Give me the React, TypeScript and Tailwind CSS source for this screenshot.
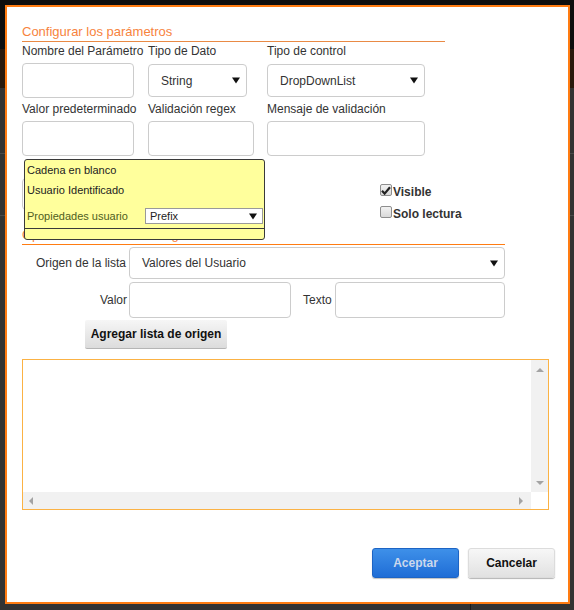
import React from 'react';

// small black triangle used by the fake <select> boxes
function Caret({ className = '' }: { className?: string }) {
  return (
    <svg width="8" height="7" viewBox="0 0 8 7" className={className}>
      <path d="M0 0.5 H8 L4 6.5 Z" fill="#111" />
    </svg>
  );
}

function FakeSelect({ value, className = '' }: { value: string; className?: string }) {
  return (
    <div
      className={
        'flex items-center justify-between border border-[#cccccc] rounded-[4px] bg-white text-[12px] text-[#333] ' +
        className
      }
    >
      <span>{value}</span>
      <Caret />
    </div>
  );
}

function TextBox({ className = '' }: { className?: string }) {
  return <div className={'border border-[#cccccc] rounded-[4px] bg-white ' + className} />;
}

function Check({ checked, label }: { checked?: boolean; label: string }) {
  return (
    <div className="flex items-center h-[22px]">
      <span className="mb-[4px] w-[12px] h-[12px] rounded-[2px] border border-[#8e8e8e] bg-[linear-gradient(#f2f2f2,#d9d9d9)] flex items-center justify-center">
        {checked && (
          <svg width="10" height="9" viewBox="0 0 10 9">
            <path d="M1 4.8 L3.6 7.6 L9 1.2" stroke="#222" strokeWidth="2.2" fill="none" />
          </svg>
        )}
      </span>
      <span className="ml-[1px] text-[12px] font-bold text-[#333]">{label}</span>
    </div>
  );
}

function ScrollArrow({ dir }: { dir: 'up' | 'down' | 'left' | 'right' }) {
  const d = {
    up: 'M0 5 L4 1 L8 5 Z',
    down: 'M0 1 L8 1 L4 5 Z',
    left: 'M5 0 L5 8 L1 4 Z',
    right: 'M1 0 L1 8 L5 4 Z',
  }[dir];
  const vertical = dir === 'up' || dir === 'down';
  return (
    <svg width={vertical ? 8 : 6} height={vertical ? 6 : 8} viewBox={vertical ? '0 0 8 6' : '0 0 6 8'}>
      <path d={d} fill="#a3a3a3" />
    </svg>
  );
}

export default function App() {
  return (
    <div
      className="relative w-[574px] h-[610px] overflow-hidden bg-[#333333] flex flex-col"
      style={{ fontFamily: '"Liberation Sans", Arial, sans-serif' }}
    >
      {/* page behind the dialog */}
      <div className="h-[52px] bg-[#0e0e0e]" />
      <div className="h-[42px] bg-[#2a190c]" />
      <div className="h-[70px] border-b border-[#4a4a4a]" />
      <div className="h-[66px] border-b border-[#4a4a4a]" />
      <div className="flex-1 flex justify-start">
        <div className="ml-[470px] mt-[374px] w-px h-[20px] bg-[#1a1a1a]" />
      </div>

      {/* dialog */}
      <div className="absolute left-[5px] top-[5px] w-[565px] h-[599px] bg-white border-2 border-[#ff7c12] pl-[15px] pt-[15px] flex flex-col">
        <div className="w-[423px] h-[20px] leading-[19px] text-[13px] text-[#f7833d] border-b border-[#e98a45]">
          Configurar los parámetros
        </div>

        <div className="flex h-[18px] leading-[18px] text-[12px] text-[#333]">
          <span className="w-[126px] whitespace-nowrap">Nombre del Parámetro</span>
          <span className="w-[119px]">Tipo de Dato</span>
          <span>Tipo de control</span>
        </div>
        <div className="mt-[3px] flex items-center h-[35px]">
          <TextBox className="w-[112px] h-[35px]" />
          <FakeSelect value="String" className="ml-[14px] w-[99px] h-[33px] pl-[12px] pr-[6px]" />
          <FakeSelect value="DropDownList" className="ml-[20px] w-[158px] h-[33px] pl-[12px] pr-[6px]" />
        </div>

        <div className="mt-[2px] flex h-[18px] leading-[18px] text-[12px] text-[#333]">
          <span className="w-[126px] whitespace-nowrap">Valor predeterminado</span>
          <span className="w-[119px]">Validación regex</span>
          <span>Mensaje de validación</span>
        </div>
        <div className="mt-[3px] flex items-center h-[35px]">
          <TextBox className="w-[112px] h-[35px]" />
          <TextBox className="ml-[14px] w-[106px] h-[35px]" />
          <TextBox className="ml-[13px] w-[158px] h-[35px]" />
        </div>

        {/* row mostly hidden under the yellow list */}
        <div className="flex h-[69px]">
          <div className="w-[358px] flex flex-col">
            <TextBox className="mt-[22px] w-[112px] h-[32px]" />
          </div>
          <div className="pt-[25px] flex flex-col">
            <Check checked label="Visible" />
            <Check label="Solo lectura" />
          </div>
        </div>

        <div className="w-[483px] h-[20px] leading-[19px] text-[13px] text-[#f7833d] border-b border-[#ff7c12]">
          Opciones de la lista de origen
        </div>

        <div className="mt-[2px] flex items-center h-[32px] w-[483px]">
          <span className="w-[107px] pr-[3px] text-right text-[12px] text-[#333] whitespace-nowrap">Origen de la lista</span>
          <FakeSelect value="Valores del Usuario" className="flex-1 h-[32px] pl-[12px] pr-[6px]" />
        </div>
        <div className="mt-[3px] flex items-center h-[36px] w-[483px]">
          <span className="w-[107px] pr-[2px] text-right text-[12px] text-[#333]">Valor</span>
          <TextBox className="w-[162px] h-[36px]" />
          <span className="ml-[12px] text-[12px] text-[#333]">Texto</span>
          <TextBox className="ml-[3px] flex-1 h-[36px]" />
        </div>
        <div className="mt-[2px] ml-[63px]">
          <div className="w-[142px] h-[29px] flex items-center justify-center rounded-[2px] bg-[linear-gradient(#f6f6f6,#dcdcdc)] border-b border-[#b5b5b5] text-[12px] font-bold text-[#111]">
            Agregar lista de origen
          </div>
        </div>

        {/* list box */}
        <div className="mt-[10px] w-[527px] h-[151px] border border-[#fbb244] flex flex-col">
          <div className="flex-1 flex">
            <div className="flex-1 bg-white" />
            <div className="w-[17px] bg-[#f1f1f1] flex flex-col items-center justify-between pt-[7px] pb-[6px]">
              <ScrollArrow dir="up" />
              <ScrollArrow dir="down" />
            </div>
          </div>
          <div className="h-[17px] flex">
            <div className="flex-1 bg-[#f1f1f1] flex items-center justify-between pl-[5px] pr-[7px]">
              <ScrollArrow dir="left" />
              <ScrollArrow dir="right" />
            </div>
            <div className="w-[17px] bg-white" />
          </div>
        </div>

        <div className="mt-[38px] flex justify-end pr-[13px] gap-[9px]">
          <div className="w-[87px] h-[30px] flex items-center justify-center rounded-[3px] border border-[#1d64c4] bg-[linear-gradient(#3e90e9,#1f6dd6)] text-[12px] font-bold text-[#cbd8ec] shadow-[0_1px_1px_rgba(0,0,0,0.25)]">
            Aceptar
          </div>
          <div className="w-[87px] h-[30px] flex items-center justify-center rounded-[3px] border border-[#dcdcdc] bg-[linear-gradient(#f7f7f7,#e1e1e1)] text-[12px] font-bold text-[#111] shadow-[0_1px_1px_rgba(0,0,0,0.3)]">
            Cancelar
          </div>
        </div>

        {/* yellow list laid over the form */}
        <div className="absolute left-[17px] top-[152px] w-[241px] h-[81px] bg-[#ffff9c] border border-[#3a3a3a] rounded-[3px] flex flex-col text-[11px]">
          <div className="h-[20px] flex items-center pl-[2px] text-[#222]">Cadena en blanco</div>
          <div className="h-[20px] flex items-center pl-[2px] text-[#222]">Usuario Identificado</div>
          <div className="h-[28px] pt-[4px] flex items-center pl-[2px]">
            <span className="w-[118px] text-[#4f5e22]">Propiedades usuario</span>
            <div className="w-[118px] h-[16px] border border-[#9a9a9a] bg-white flex items-center justify-between pl-[4px] pr-[5px] text-[11px] text-[#222]">
              <span>Prefix</span>
              <Caret />
            </div>
          </div>
          <div className="border-t border-[#3a3a3a] flex-1" />
        </div>
      </div>
    </div>
  );
}
